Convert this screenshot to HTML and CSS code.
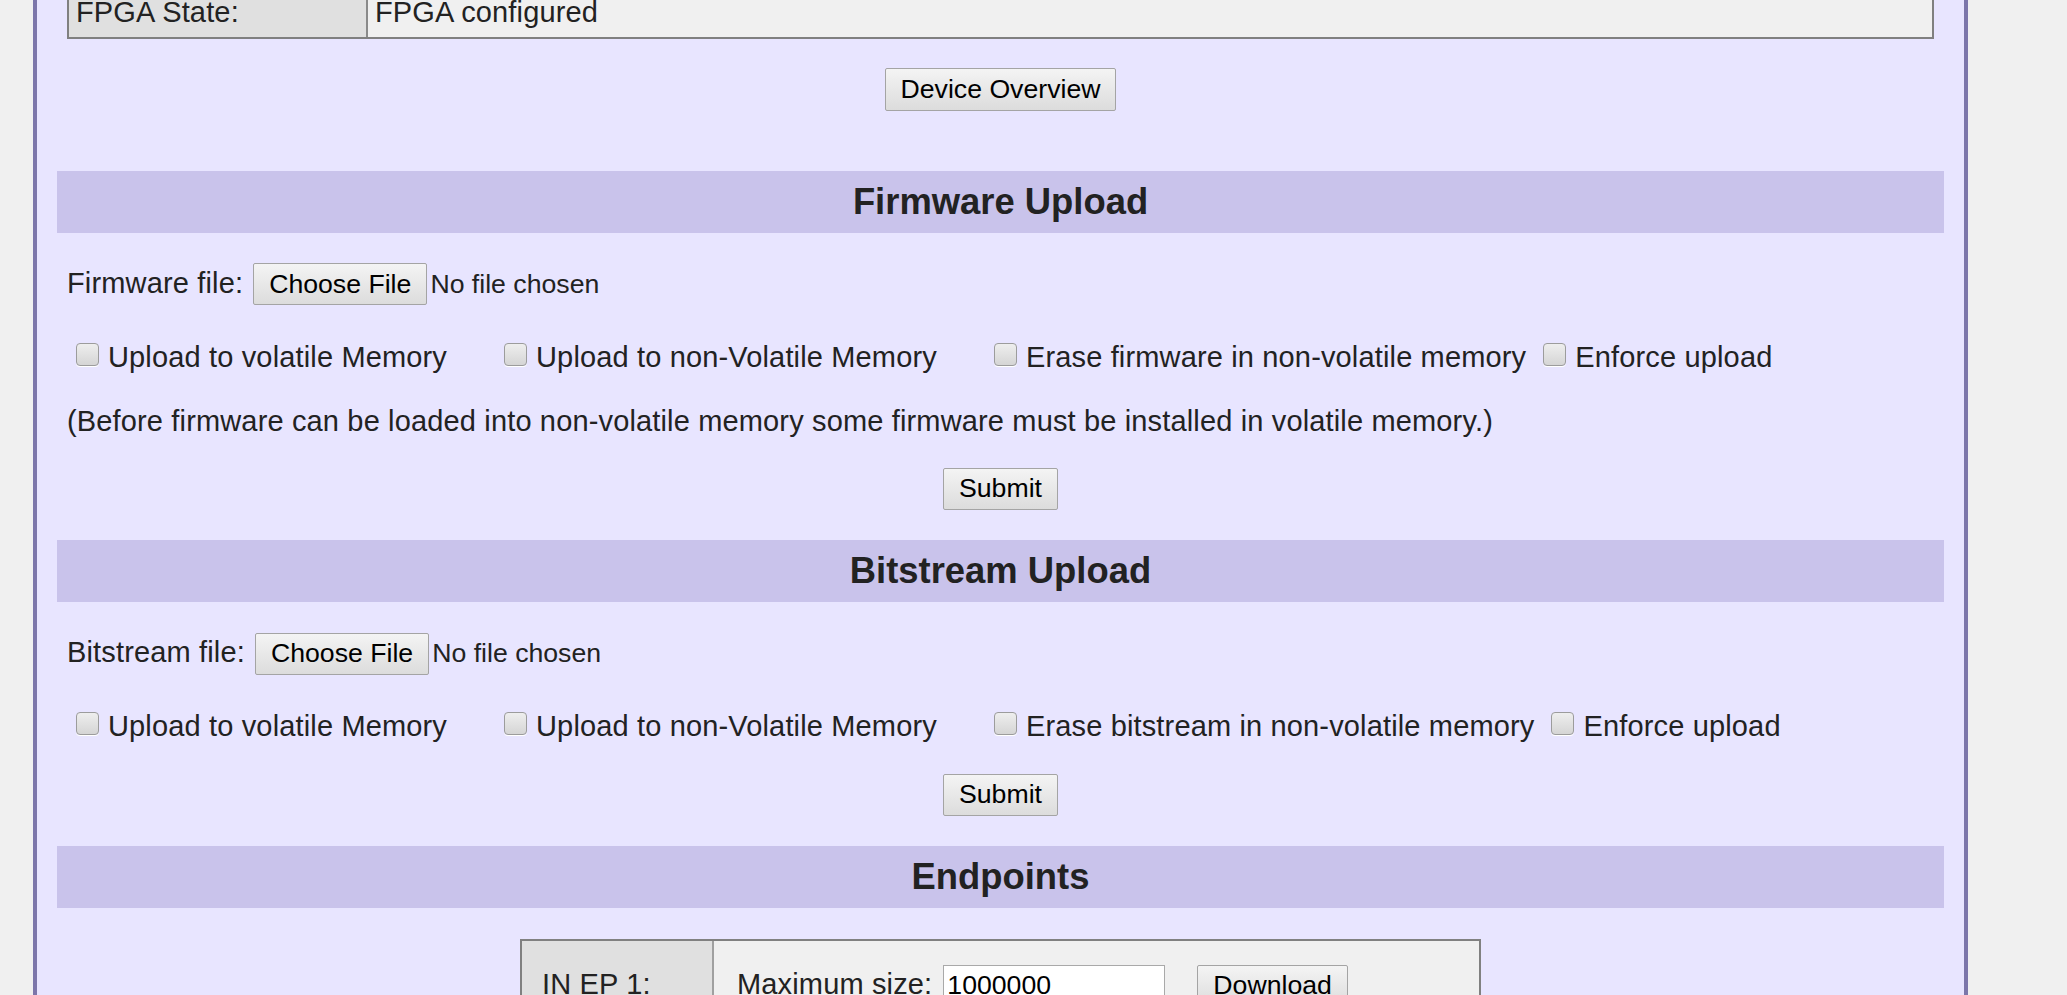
FILE: index.html
```html
<!DOCTYPE html>
<html lang="en">
<head>
<meta charset="utf-8">
<title>Device Management</title>
<link rel="stylesheet" href="styles.css">
</head>
<body>
<div class="page">
  <table class="info">
    <tr><th>FPGA State:</th><td>FPGA configured</td></tr>
  </table>
  <div class="actions actions-top"><button class="btn btn-tall" type="button">Device Overview</button></div>

  <h2 class="band band-first">Firmware Upload</h2>
  <form class="upload">
    <div class="file-row">
      <span class="file-label">Firmware file:</span><button class="btn" type="button">Choose File</button><span class="file-status">No file chosen</span>
    </div>
    <div class="opts">
      <label class="opt wide"><input type="checkbox">Upload to volatile Memory</label>
      <label class="opt wide"><input type="checkbox">Upload to non-Volatile Memory</label>
      <label class="opt"><input type="checkbox">Erase firmware in non-volatile memory</label>
      <label class="opt"><input type="checkbox">Enforce upload</label>
    </div>
    <p class="note">(Before firmware can be loaded into non-volatile memory some firmware must be installed in volatile memory.)</p>
    <div class="actions actions-note"><button class="btn" type="submit">Submit</button></div>
  </form>

  <h2 class="band">Bitstream Upload</h2>
  <form class="upload">
    <div class="file-row">
      <span class="file-label">Bitstream file:</span><button class="btn" type="button">Choose File</button><span class="file-status">No file chosen</span>
    </div>
    <div class="opts">
      <label class="opt wide"><input type="checkbox">Upload to volatile Memory</label>
      <label class="opt wide"><input type="checkbox">Upload to non-Volatile Memory</label>
      <label class="opt"><input type="checkbox">Erase bitstream in non-volatile memory</label>
      <label class="opt"><input type="checkbox">Enforce upload</label>
    </div>
    <div class="actions actions-opts"><button class="btn" type="submit">Submit</button></div>
  </form>

  <h2 class="band">Endpoints</h2>
  <table class="ep">
    <tr>
      <th>IN EP 1:</th>
      <td>
        <div class="ep-row">
          <span>Maximum size:</span><input class="size" type="text" value="1000000"><button class="btn" type="button">Download</button>
        </div>
      </td>
    </tr>
  </table>
</div>
</body>
</html>
```

FILE: styles.css
```css
* {
  box-sizing: border-box;
}

html {
  background: #f0f0f0;
}

body {
  margin: 0;
  font-family: "Liberation Sans", Arial, sans-serif;
  font-size: 29px;
  letter-spacing: 0.15px;
  color: #222222;
  background: #f0f0f0;
}

.page {
  width: 1935px;
  margin: -14px 0 0 33px;
  padding: 0 20px 60px;
  background: #e8e5ff;
  border-left: 4px solid #7c76aa;
  border-right: 4px solid #7c76aa;
  display: flex;
  flex-direction: column;
}

/* info table */
.info {
  width: calc(100% - 20px);
  margin: 0 10px;
  border: 2px solid #808080;
  border-spacing: 0;
  border-collapse: separate;
}

.info th,
.info td {
  padding: 8px 7px;
  font-weight: normal;
  text-align: left;
  line-height: normal;
}

.info th {
  width: 299px;
  background: #e0e0e0;
  border-right: 2px solid #8a8a8a;
}

.info td {
  background: #f0f0f0;
}

/* buttons */
.btn {
  height: 42px;
  padding: 0 15px;
  font-family: "Liberation Sans", Arial, sans-serif;
  font-size: 26.67px;
  letter-spacing: 0;
  color: #000000;
  background: linear-gradient(#f4f4f4, #dcdcdc);
  border: 1px solid #a4a4a4;
  border-radius: 2px;
  margin: 0;
}

.btn-tall {
  height: 43px;
}

.actions {
  display: flex;
  justify-content: center;
}

.actions-top {
  margin-top: 29px;
}

.actions-note {
  margin-top: 30.4px;
}

.actions-opts {
  margin-top: 30.7px;
}

/* section bands */
.band {
  margin: 30.5px 0 0;
  height: 62px;
  padding: 10px 0;
  line-height: 42px;
  font-size: 36.4px;
  font-weight: bold;
  letter-spacing: 0;
  text-align: center;
  background: #c9c3eb;
  color: #222222;
}

.band-first {
  margin-top: 60px;
}

/* upload forms */
.upload {
  display: flex;
  flex-direction: column;
  padding: 0 10px;
  margin: 0;
}

.file-row {
  display: flex;
  align-items: baseline;
  margin-top: 30.3px;
}

.file-label {
  margin-right: 10px;
}

.file-status {
  margin-left: 3px;
  font-size: 26.67px;
  letter-spacing: 0;
}

.opts {
  display: flex;
  flex-wrap: wrap;
  align-items: center;
  margin-top: 35.3px;
}

.opt {
  display: inline-flex;
  align-items: center;
  line-height: normal;
  margin-right: 8px;
}

.opt.wide {
  margin-right: 48px;
}

.opt input {
  appearance: none;
  -webkit-appearance: none;
  width: 23px;
  height: 23px;
  margin: 0 9px 6px 9px;
  border: 1px solid #9c9c9c;
  border-radius: 4px;
  background: linear-gradient(#eeeeee, #d5d5d5);
  box-shadow: 0 1px 0 #ffffff;
}

.note {
  margin: 31px 0 0;
  line-height: normal;
}

/* endpoints */
.ep {
  width: 961px;
  margin: 30.3px auto 0;
  border: 2px solid #808080;
  border-spacing: 0;
  border-collapse: separate;
}

.ep th,
.ep td {
  vertical-align: baseline;
  font-weight: normal;
  text-align: left;
  line-height: normal;
}

.ep th {
  width: 192px;
  padding: 24px 20px;
  background: #e0e0e0;
  border-right: 2px solid #a0a0a0;
}

.ep td {
  padding: 24px 23px;
  background: #f0f0f0;
}

.ep-row {
  display: flex;
  align-items: baseline;
}

.size {
  width: 222px;
  height: 41px;
  margin: 0 32px 0 11px;
  padding: 0 3px;
  font-family: "Liberation Sans", Arial, sans-serif;
  font-size: 26.67px;
  letter-spacing: 0;
  color: #000000;
  background: #ffffff;
  border: 1px solid #a9a9a9;
}
```
